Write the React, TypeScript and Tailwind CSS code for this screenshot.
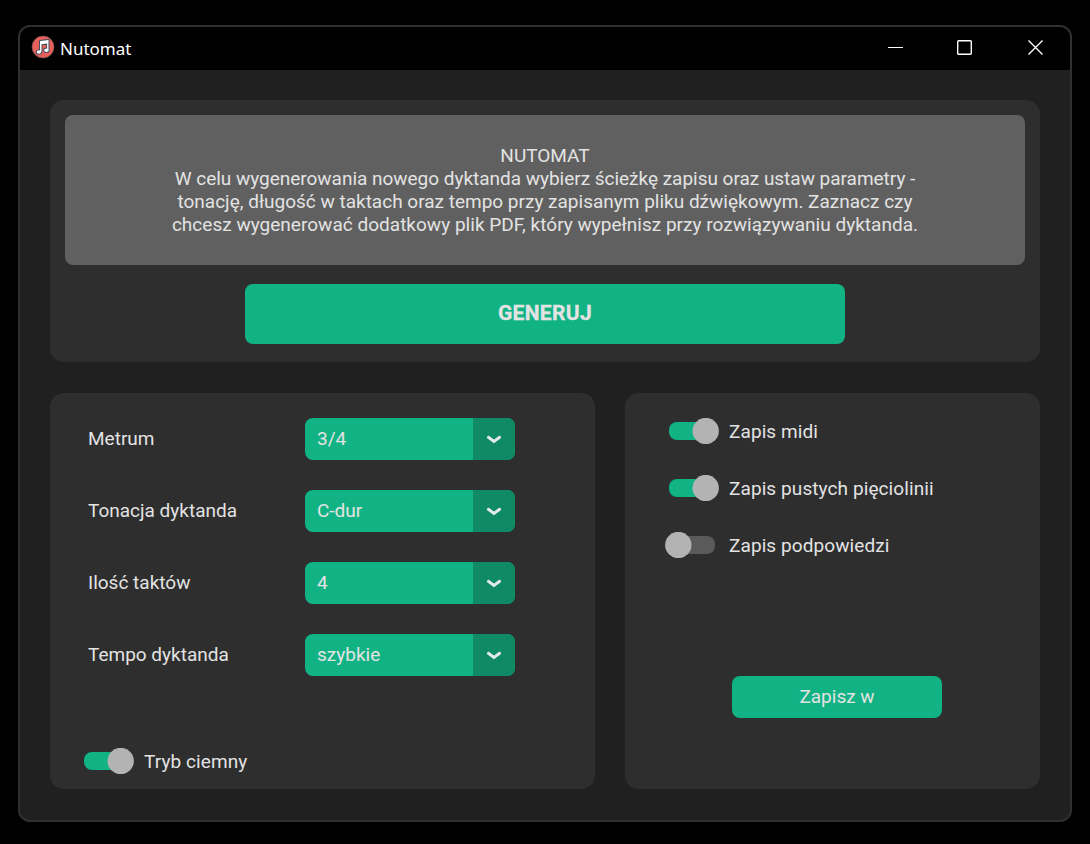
import React, { useState } from "react";

function Logo() {
  return (
    <svg className="mt-[8px] h-[24px] w-[24px]" viewBox="0 0 24 24">
      <circle cx="12" cy="12" r="11" fill="#e8605c" stroke="#6e5052" strokeWidth="0.7" />
      <g stroke="#324a5e" strokeWidth="1.8" fill="#324a5e" strokeLinejoin="round">
        <path d="M9 6 17.5 5V15h-1.4V8.6l-5.6.7V17H9z" />
        <ellipse cx="7.9" cy="17" rx="2.2" ry="1.7" />
        <ellipse cx="15.4" cy="15.2" rx="2.1" ry="1.7" />
      </g>
      <g fill="#fff">
        <path d="M9 6 17.5 5V15h-1.4V8.6l-5.6.7V17H9z" />
        <ellipse cx="7.9" cy="17" rx="2.2" ry="1.7" />
        <ellipse cx="15.4" cy="15.2" rx="2.1" ry="1.7" />
      </g>
    </svg>
  );
}

function TitleBar() {
  return (
    <header className="flex h-[43px] shrink-0 bg-black pl-[11px]">
      <Logo />
      <h1 className="ml-[5px] mt-[10px] font-['Noto_Sans',sans-serif] text-[17px] leading-6 text-white">
        Nutomat
      </h1>
      <div className="ml-auto mr-[27px] mt-[12px] flex gap-[53px]">
        <svg className="h-4 w-4" viewBox="0 0 16 16">
          <path d="M0 8.5h15" stroke="#fff" />
        </svg>
        <svg className="h-4 w-[17px]" viewBox="0 0 17 16">
          <rect x="0.7" y="1.7" width="13.6" height="13.6" rx="1" fill="none" stroke="#fff" strokeWidth="1.4" />
        </svg>
        <svg className="h-4 w-4" viewBox="0 0 16 16">
          <path d="m1.5 1.5 14 14m0-14-14 14" stroke="#fff" strokeWidth="1.4" />
        </svg>
      </div>
    </header>
  );
}

function SelectRow({ label, value }: { label: string; value: string }) {
  return (
    <div className="flex h-[42px] items-center">
      <span className="w-[217px] whitespace-nowrap">{label}</span>
      <button className="flex h-[42px] w-[210px] overflow-hidden rounded-[8px] bg-[#11b384] text-left">
        <span className="flex-1 pl-3 leading-[42px]">{value}</span>
        <span className="flex h-full w-[42px] items-center justify-center bg-[#0f8a65]">
          <svg className="mt-px h-[9px] w-4" viewBox="0 0 16 9">
            <path d="M2.4 2.3 8 6.4l5.6-4.1" fill="none" stroke="#e2ebe7" strokeWidth="3" strokeLinecap="round" strokeLinejoin="miter" />
          </svg>
        </span>
      </button>
    </div>
  );
}

function Switch({ label, initial }: { label: string; initial: boolean }) {
  const [on, setOn] = useState(initial);
  return (
    <button className="flex h-[26px] whitespace-nowrap" onClick={() => setOn(!on)}>
      <svg className="mr-[10px] h-[26px] w-[54px]" viewBox="0 0 54 26">
        <rect x="4" y="4" width="46" height="18" rx="8" fill={on ? "#11b384" : "#5a5a5a"} />
        <circle cx={on ? 40.7 : 13.3} cy="13" r="13.2" fill="#b3b3b3" />
      </svg>
      <span className="pt-px leading-[26px] tracking-[0.09px]">{label}</span>
    </button>
  );
}

export default function App() {
  return (
    <main className="h-[844px] w-[1090px] bg-black pl-[18px] pt-[25px] font-[Roboto,sans-serif] text-[19px] text-[#e3e3e3]">
      <section className="flex h-[797px] w-[1054px] flex-col overflow-hidden rounded-[12px] border-2 border-[#303030] bg-[#202020]">
        <TitleBar />
        <div className="flex flex-1 flex-col px-[30px] pt-[30px]">
          <div className="flex h-[262px] w-[990px] flex-col items-center rounded-[14px] bg-[#2e2e2e] pt-[15px]">
            <div className="flex h-[150px] w-[960px] flex-col items-center rounded-[8px] bg-[#606060] pt-[29px] leading-[23px]">
              <p className="whitespace-nowrap">NUTOMAT</p>
              <p className="whitespace-nowrap tracking-[-0.02px]">W celu wygenerowania nowego dyktanda wybierz ścieżkę zapisu oraz ustaw parametry -</p>
              <p className="whitespace-nowrap">tonację, długość w taktach oraz tempo przy zapisanym pliku dźwiękowym. Zaznacz czy</p>
              <p className="whitespace-nowrap tracking-[0.02px]">chcesz wygenerować dodatkowy plik PDF, który wypełnisz przy rozwiązywaniu dyktanda.</p>
            </div>
            <button className="mt-[19px] h-[60px] w-[600px] rounded-[8px] bg-[#11b384] pb-[2px] text-[21px] font-bold leading-6 tracking-[0.35px] [-webkit-text-stroke:0.3px_#e3e3e3]">
              GENERUJ
            </button>
          </div>
          <div className="mt-[31px] flex gap-[30px]">
            <div className="flex h-[396px] w-[545px] flex-col rounded-[14px] bg-[#2e2e2e] pt-[25px]">
              <div className="flex flex-col gap-[30px] pl-[38px]">
                <SelectRow label="Metrum" value="3/4" />
                <SelectRow label="Tonacja dyktanda" value="C-dur" />
                <SelectRow label="Ilość taktów" value="4" />
                <SelectRow label="Tempo dyktanda" value="szybkie" />
              </div>
              <div className="mt-[72px] pl-[30px]">
                <Switch label="Tryb ciemny" initial={true} />
              </div>
            </div>
            <div className="flex h-[396px] w-[415px] flex-col rounded-[14px] bg-[#2e2e2e] pl-10 pt-[25px]">
              <div className="flex flex-col gap-[31px]">
                <Switch label="Zapis midi" initial={true} />
                <Switch label="Zapis pustych pięciolinii" initial={true} />
                <Switch label="Zapis podpowiedzi" initial={false} />
              </div>
              <button className="ml-[67px] mt-[118px] h-[42px] w-[210px] rounded-[8px] bg-[#11b384]">
                Zapisz w
              </button>
            </div>
          </div>
        </div>
      </section>
    </main>
  );
}
